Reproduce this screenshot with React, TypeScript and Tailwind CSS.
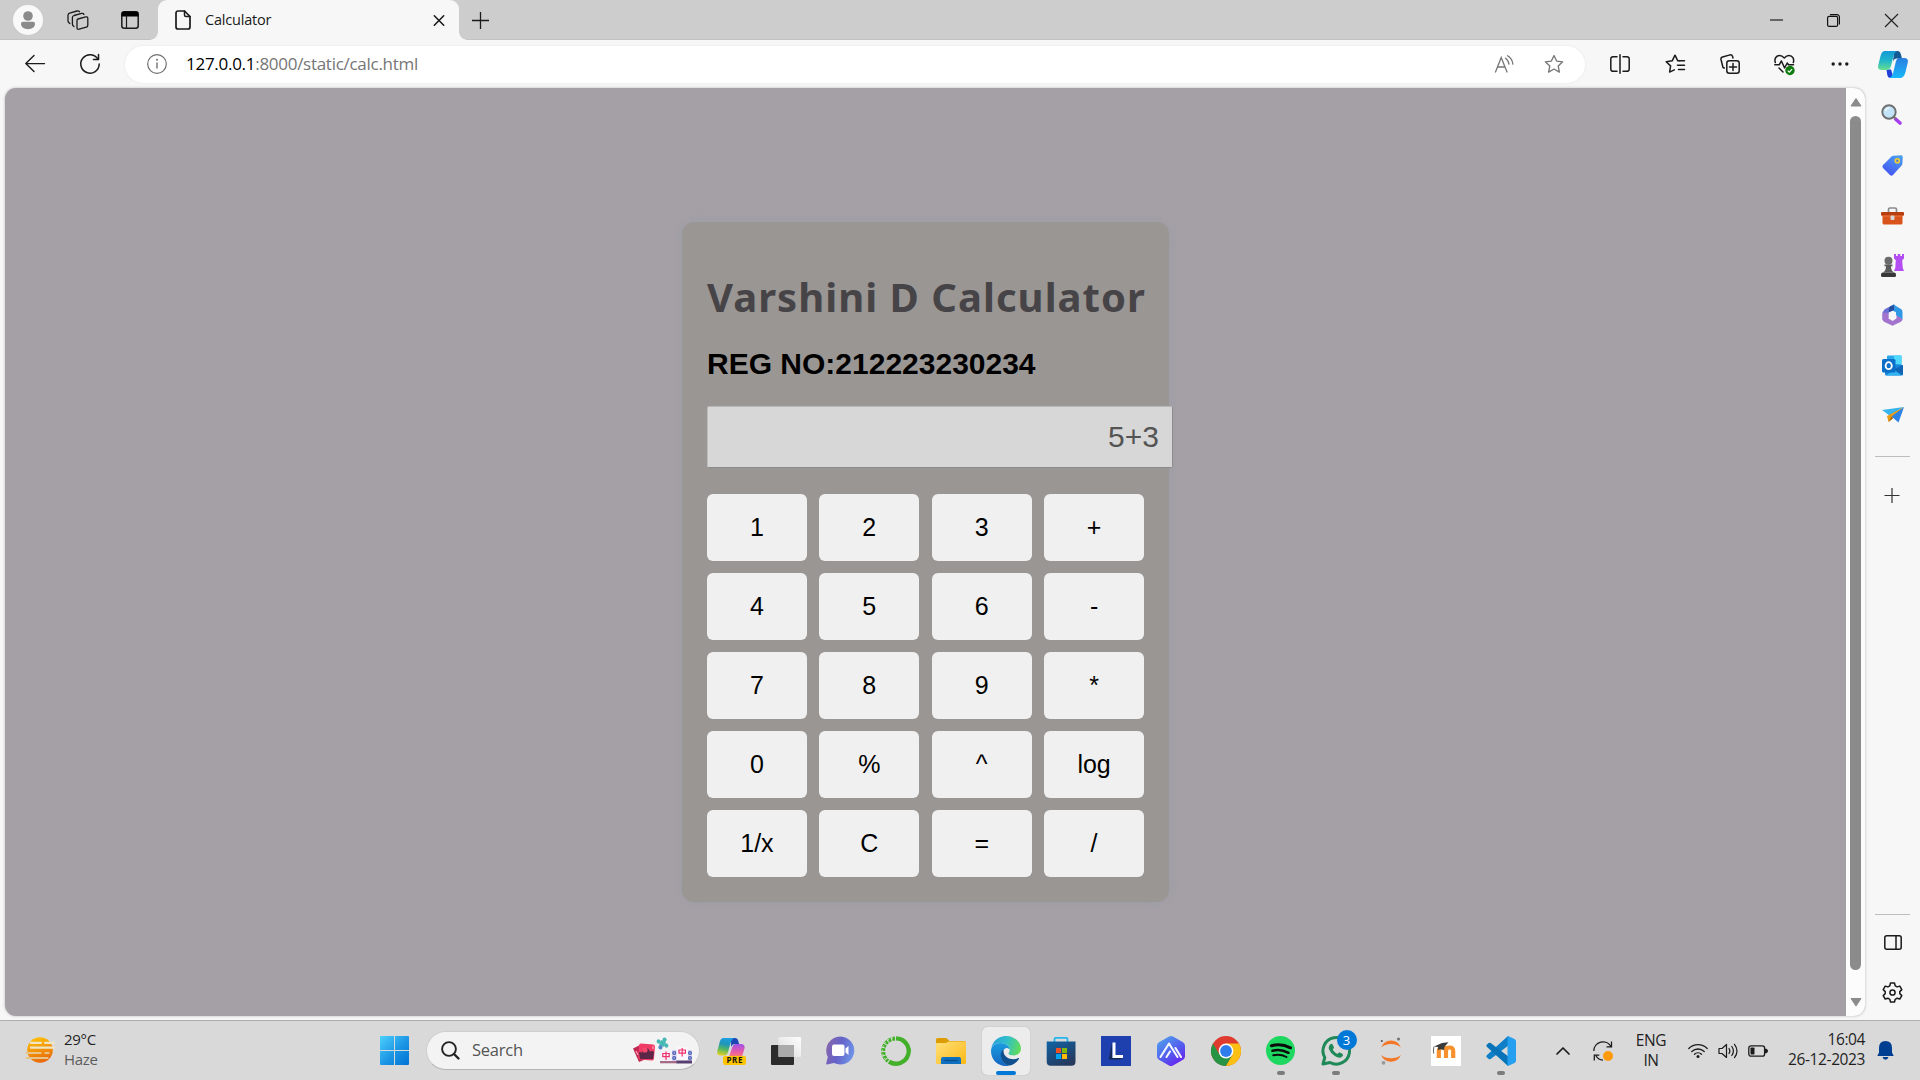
import React from "react";

type Kids = { children?: React.ReactNode };
type IconProps = Kids & { w?: number; h?: number; vb?: string; className?: string };

function Svg({ w = 24, h, vb, className = "", children }: IconProps) {
  const hh = h ?? w;
  return (
    <svg width={w} height={hh} viewBox={vb ?? `0 0 ${w} ${hh}`} fill="none" className={`block shrink-0 overflow-visible ${className}`}>
      {children}
    </svg>
  );
}

function Cell({ className = "", children }: Kids & { className?: string }) {
  return <div className={`flex shrink-0 items-center justify-center ${className}`}>{children}</div>;
}

const ink = { stroke: "#1b1b1b", strokeWidth: 1.5, strokeLinecap: "round" as const, strokeLinejoin: "round" as const };

/* ---------- browser chrome ---------- */

function TabStrip() {
  return (
    <div className="flex h-10 bg-[#cdcdcd] shadow-[inset_0_-1px_0_#c2c2c2]">
      <Cell className="w-14">
        <Svg w={30}>
          <circle cx="15" cy="15" r="15" fill="#f9f9f9" />
          <circle cx="15" cy="11" r="4.8" fill="#8b8b8b" />
          <path d="M10 16.800h10a2 2 0 0 1 2 2c0 3.400-3 5.400-7 5.400s-7-2-7-5.400a2 2 0 0 1 2-2z" fill="#8b8b8b" />
        </Svg>
      </Cell>
      <Cell className="w-11">
        <Svg w={22} h={20}>
          <g {...ink} strokeWidth={1.3}>
            <path d="M11 9 18.800 6.900q2-.4 2 1.500v6.800q0 1.500-1.400 1.900l-7.400 2.100q-2 .5-2-1.500v-7.200q0-1.300 1-1.600z" />
            <path d="M7 16.600 6.400 16q-1-.8-1-2V7.500Q5.400 6 7 5.500l7.500-2.100q1.700-.4 2.500.9" />
            <path d="M2.800 13.500 2 12.800q-1-.8-1-2V5.300Q1 3.600 2.600 3.100L10 1q1.600-.4 2.500.7" />
          </g>
        </Svg>
      </Cell>
      <Cell className="w-[58px] pl-0.5">
        <Svg w={18}>
          <rect x=".8" y=".8" width="16.400" height="16.400" rx="2.500" {...ink} />
          <path d="M.5 5.500V3A2.500 2.500 0 0 1 3 .5h12A2.500 2.500 0 0 1 17.500 3v2.500z" fill="#000" />
          <path d="M5.500 5v12" {...ink} strokeWidth={1.2} />
        </Svg>
      </Cell>
      <div className="relative flex w-[301px] items-center rounded-t-[9px] bg-[#f7f7f7] pl-[17px] pr-[12px]">
        <Svg w={16} h={20} className="mr-[14px]">
          <path d="M3 1h6.500L15 6.500V17a2 2 0 0 1-2 2H3a2 2 0 0 1-2-2V3a2 2 0 0 1 2-2z" {...ink} strokeWidth={1.7} />
          <path d="M9.500 1v4a1.500 1.500 0 0 0 1.500 1.500h4" {...ink} strokeWidth={1.5} />
        </Svg>
        <span className="grow text-[14.500px] tracking-[-0.200px] text-[#1a1a1a]">Calculator</span>
        <Svg w={16}>
          <path d="M3.300 3.800l9.400 9.400M12.700 3.800L3.300 13.200" {...ink} strokeWidth={1.6} />
        </Svg>
        <div className="absolute -left-2 bottom-0 size-2 bg-[radial-gradient(circle_at_0_0,#cdcdcd_7.5px,#f7f7f7_8px)]" />
        <div className="absolute -right-2 bottom-0 size-2 bg-[radial-gradient(circle_at_100%_0,#cdcdcd_7.5px,#f7f7f7_8px)]" />
      </div>
      <Cell className="w-[43px]">
        <Svg w={17}>
          <path d="M8.500 0v17M0 8.500h17" stroke="#1b1b1b" strokeWidth="1.300" />
        </Svg>
      </Cell>
      <div className="grow" />
      <Cell className="w-[57px]">
        <Svg w={13}>
          <path d="M0 6h13" stroke="#111" strokeWidth="1.100" />
        </Svg>
      </Cell>
      <Cell className="w-[57px]">
        <Svg w={13}>
          <rect x=".6" y="2.400" width="10" height="10" rx="1.500" stroke="#111" strokeWidth="1.200" />
          <path d="M3 .6h7a2.400 2.400 0 0 1 2.400 2.400v7.400" stroke="#111" strokeWidth="1.200" />
        </Svg>
      </Cell>
      <Cell className="w-[58px]">
        <Svg w={13}>
          <path d="M0 0l13 13M13 0L0 13" stroke="#222" strokeWidth="1.200" />
        </Svg>
      </Cell>
    </div>
  );
}

const star = "M10 1.500l2.600 5.600 6.100.7-4.500 4.200 1.200 6.100L10 15l-5.400 3.100 1.200-6.100L1.300 7.800l6.100-.7z";

function Toolbar() {
  return (
    <div className="flex h-12 items-center bg-[#f7f7f7]">
      <Cell className="w-[70px]">
        <Svg w={20} h={18}>
          <path d="M19.500 8.600H.8M9 .6.8 8.600 9 16.600" {...ink} strokeWidth={1.4} />
        </Svg>
      </Cell>
      <Cell className="w-10">
        <Svg w={20}>
          <path d="M18 5.400A9.200 9.200 0 1 0 19.200 10" {...ink} strokeWidth={1.5} />
          <path d="M18.500.6v5h-5" {...ink} strokeWidth={1.5} />
        </Svg>
      </Cell>
      <div className="ml-[15px] flex h-[37px] w-[1460px] items-center rounded-full bg-white shadow-[0_0_3px_rgba(0,0,0,0.07)]">
        <Svg w={20} className="ml-[22px]">
          <circle cx="10" cy="10" r="9.300" stroke="#707070" strokeWidth="1.200" />
          <path d="M10 8.500v6" stroke="#707070" strokeWidth="1.400" />
          <circle cx="10" cy="5.800" r="1" fill="#707070" />
        </Svg>
        <span className="-mt-px ml-[19px] grow text-[17px] tracking-[-0.280px] text-[#757575]">
          <span className="text-black">127.0.0.1</span>:8000/static/calc.html
        </span>
        <Svg w={20} h={18} className="mr-[30px]">
          <g stroke="#757575" strokeWidth="1.300" strokeLinecap="round">
            <path d="M1.500 17 7.200 2.500 13 17M3.500 12h7.400" />
            <path d="M11.500 3.200q3 2 3.500 6M13.500.8q4.700 2.600 5.400 8.400" />
          </g>
        </Svg>
        <Svg w={20} className="mr-[21px]">
          <path d={star} stroke="#757575" strokeWidth="1.300" strokeLinejoin="round" />
        </Svg>
      </div>
      <Cell className="ml-[7px] w-[55px]">
        <Svg w={20}>
          <path d="M7 2.700H3A2.200 2.200 0 0 0 .8 5v10A2.200 2.200 0 0 0 3 17.300h4M13 2.700h4A2.200 2.200 0 0 1 19.200 5v10a2.200 2.200 0 0 1-2.200 2.300h-4M10 .8v18.400" {...ink} />
        </Svg>
      </Cell>
      <Cell className="w-[55px]">
        <Svg w={20}>
          <path d="M14.500 6.800h-1.700L10 1.200 7.200 6.800 1.200 7.700l4.400 4.200-1 6.200 4.700-2.300" {...ink} />
          <path d="M14.500 6.800H19.500M12.500 11.200H19.500M13.500 15.400H19.500" {...ink} />
        </Svg>
      </Cell>
      <Cell className="w-[55px]">
        <Svg w={20}>
          <rect x="6.800" y="6.800" width="12.400" height="12.400" rx="2.500" {...ink} />
          <path d="M13 9.500v7M9.500 13h7M4.300 14 3 13.500l-2-8Q.6 3.600 2.500 3L10 .9q1.800-.4 2.500 1.300l.5 1.800" {...ink} />
        </Svg>
      </Cell>
      <Cell className="w-[55px]">
        <Svg w={21} h={21}>
          <path d="M1.300 8.500C0 4.500 2.500 1.500 5.500 1.500c2.200 0 3.500 1 4.800 2.500C11.600 2.500 13 1.500 15 1.500c3.500 0 5.500 3.500 4.300 7M5 14l4 4" {...ink} />
          <path d="M.8 10.800h4.400L7.400 7l3.200 7 2.600-5 1.300 1.800h5" {...ink} />
          <circle cx="16" cy="16.500" r="4.700" fill="#107c10" />
          <path d="M13.800 16.600l1.500 1.500 2.800-2.900" stroke="#fff" strokeWidth="1.200" />
        </Svg>
      </Cell>
      <Cell className="w-[55px]">
        <Svg w={18} h={4}>
          <circle cx="2.200" cy="2" r="1.700" fill="#1b1b1b" />
          <circle cx="9" cy="2" r="1.700" fill="#1b1b1b" />
          <circle cx="15.800" cy="2" r="1.700" fill="#1b1b1b" />
        </Svg>
      </Cell>
      <Cell className="w-[51px]">
        <Svg w={30} h={27}>
          <defs>
            <linearGradient id="cpA" x1="0" y1="0" x2="0" y2="1">
              <stop stopColor="#1499d6" />
              <stop offset=".5" stopColor="#20b5cb" />
              <stop offset="1" stopColor="#67df91" />
            </linearGradient>
            <linearGradient id="cpB" x1="0" y1="0" x2="0" y2="1">
              <stop stopColor="#2b7de0" />
              <stop offset="1" stopColor="#17b8fb" />
            </linearGradient>
          </defs>
          <path d="M16 0h3.500q2.500 0 3.300 3l1.200 4.500h-5q-3 0-4 3z" fill="#145b96" />
          <path d="M8.500 18.500H13l1.500 4.500q-.5 3.500-1 4h-1q-2.500 0-3.200-3z" fill="#203fd6" />
          <path d="M7 0h12q-2.500 1-3.500 5l-2.500 10q-1 4-4.500 4H4q-4.800 0-3.800-4.500L2.500 5Q3.800 0 7 0z" fill="url(#cpA)" />
          <path d="M21.500 7H26q4.800 0 3.800 4.500L27.500 21Q26 27 22 27H11.500q2.500-.8 3.500-4.500l2.500-10.500q1-5 4-5z" fill="url(#cpB)" />
        </Svg>
      </Cell>
    </div>
  );
}

/* ---------- calculator page ---------- */

const keys = ["1", "2", "3", "+", "4", "5", "6", "-", "7", "8", "9", "*", "0", "%", "^", "log", "1/x", "C", "=", "/"];

function Calculator() {
  return (
    <div className="h-[680px] w-[487px] rounded-[12px] bg-[#9a9694] px-[25px] pt-[48px] shadow-[0_0_13px_#9a9ca6] [font-family:'Liberation_Sans',Arial,sans-serif]">
      <h1 className="whitespace-nowrap text-[40px] font-bold leading-[54px] tracking-[1.020px] text-[#464447] [font-family:'Noto_Sans',sans-serif]">
        Varshini D Calculator
      </h1>
      <h2 className="mt-[23px] text-[30px] font-bold leading-[34px] text-black">REG NO:212223230234</h2>
      <div className="mt-[25px] flex h-[62px] w-[466px] items-center justify-end rounded-[2px] border border-[#8b8b8b] border-l-[#bcbcbc] border-t-[#b8b8b8] bg-[#d7d7d7] pb-px pr-[13px] text-[30px] text-[#545454]">
        5+3
      </div>
      <div className="mt-[26px] grid w-[437px] grid-cols-4 gap-x-[12.500px] gap-y-3">
        {keys.map((k) => (
          <button key={k} className="h-[67px] rounded-[6px] bg-[#f0f0f0] text-[25px] text-black">
            {k}
          </button>
        ))}
      </div>
    </div>
  );
}

function Scrollbar() {
  return (
    <div className="flex w-[19px] flex-col items-center bg-[#fcfcfc] py-[10px]">
      <Svg w={12} h={9}>
        <path d="M6 .5 11 8H1z" fill="#8b8b8b" stroke="#8b8b8b" strokeLinejoin="round" />
      </Svg>
      <div className="mb-[27px] mt-[9px] w-[11px] grow rounded-full bg-[#8b8b8b]" />
      <Svg w={12} h={9}>
        <path d="M6 9 11 1.500H1z" fill="#8b8b8b" stroke="#8b8b8b" strokeLinejoin="round" />
      </Svg>
    </div>
  );
}

/* ---------- edge sidebar ---------- */

function Sidebar() {
  return (
    <div className="flex w-[55px] flex-col items-center">
      <Cell className="h-[52px] pr-0.5">
        <Svg w={21}>
          <path d="M14.500 15l4.500 4" stroke="#a53df0" strokeWidth="3.600" strokeLinecap="round" />
          <path d="M12.500 12.500l2.500 2.300" stroke="#777" strokeWidth="2" />
          <circle cx="8" cy="8" r="6.700" fill="#c3e3f8" stroke="#6f6f6f" strokeWidth="1.900" />
          <path d="M4.500 7a4 4 0 0 1 4-3" stroke="#eef9ff" strokeWidth="1.500" />
        </Svg>
      </Cell>
      <Cell className="h-[51px]">
        <Svg w={21}>
          <defs>
            <linearGradient id="tag" x1=".8" y1="0" x2=".3" y2="1">
              <stop stopColor="#4aa0f0" />
              <stop offset="1" stopColor="#4553f2" />
            </linearGradient>
          </defs>
          <path d="M11.500.8 19 .3q1.800 0 1.800 1.700l-.4 6.500q0 1-.8 1.900L11 20q-1.500 1.300-3 0L1 13q-1.300-1.500 0-3L9.500 1.500q.8-.7 2-.7z" fill="url(#tag)" />
          <circle cx="15.300" cy="5.700" r="2" fill="#5b7ad0" stroke="#f8d030" strokeWidth="1.600" />
        </Svg>
      </Cell>
      <Cell className="h-[50px]">
        <Svg w={23} h={18}>
          <path d="M7.500 5V2.500Q7.500 1 9 1h5q1.500 0 1.500 1.500V5" stroke="#8a8a8a" strokeWidth="1.700" />
          <rect x="1.500" y="5" width="20" height="12.500" rx="1.500" fill="#d9541c" />
          <rect x="0" y="5" width="23" height="3.800" rx="1" fill="#b83e10" />
          <path d="M1.500 9h20" stroke="#ee7638" strokeWidth="1" />
          <rect x="9.500" y="8.500" width="4" height="4.500" rx="1" fill="#d6d6d6" />
        </Svg>
      </Cell>
      <Cell className="h-[49px]">
        <Svg w={23}>
          <path d="M13 0h2v2h1.700V0h2.600v2H21V0h2v4.500l-1.800 1.700.5 7.500L23 17H13l1.300-3.300.5-7.500L13 4.500z" fill="#b44df2" />
          <circle cx="7.500" cy="6.800" r="4" fill="#6b6b6b" />
          <path d="M3.500 10.500h8v1.800H10q0 4.200 2.800 6.200H2.200Q5 16.500 5 12.300H3.500z" fill="#5a5a5a" />
          <path d="M0 20.500q0-2 2-2h11q2 0 2 2v1q0 1.500-1.500 1.500h-12Q0 23 0 21.500z" fill="#383838" />
        </Svg>
      </Cell>
      <Cell className="h-[50px]">
        <Svg w={21} h={22}>
          <path d="M12.500.3 4 4.500Q.5 6.500.5 10v6l6-2.500V8.800L13 5z" fill="#6a70d8" />
          <path d="M8 2.400 11.500.5 19 5q1.500 1 1.500 3v7.500L14 11.500V8.300L8.500 5.500z" fill="#3099e6" />
          <path d="M.5 8.500V15q0 1.800 1.500 2.700l8.500 4L18.500 18q2-1 2-3l-6-3.600v3L10.500 17l-4-2.500V9z" fill="#a374ce" />
          <path d="M7 8.200 12 6v-5L8 2.400Q6.800 3.500 6.800 6z" fill="#274f9c" />
          <circle cx="10.500" cy="11.200" r="3.700" fill="#f7f7f7" />
        </Svg>
      </Cell>
      <Cell className="h-[50px]">
        <Svg w={21}>
          <rect x="5" y=".5" width="14.500" height="16" rx="1" fill="#28a8ea" />
          <path d="M12 .5h7.500V9H12z" fill="#50d9ff" />
          <path d="M3 10h18v9a1.500 1.500 0 0 1-1.500 1.500h-15A1.500 1.500 0 0 1 3 19z" fill="#1784d9" />
          <path d="M21 10v9a1.500 1.500 0 0 1-.5 1L12 14.500z" fill="#1066b5" />
          <path d="M4 20.500h15.500L12 15z" fill="#32b4f0" />
          <rect x="0" y="4" width="13.500" height="13.500" rx="1.500" fill="#0a6fc8" />
          <ellipse cx="6.700" cy="10.700" rx="3.100" ry="3.500" stroke="#fff" strokeWidth="1.800" />
        </Svg>
      </Cell>
      <Cell className="h-[50px]">
        <Svg w={22} h={16}>
          <path d="M0 3 22 0 7.500 8.500z" fill="#38b5f0" />
          <path d="M22 0 5 9 6.500 15l4-4z" fill="#e99a13" />
          <path d="M22 0 9.500 9.500 16.500 15.500z" fill="#2b82e8" />
          <path d="M9.500 9.500 6.500 15l4.500-3.500z" fill="#a76608" />
        </Svg>
      </Cell>
      <div className="mt-[16px] h-px w-[35px] bg-[#bdbdbd]" />
      <Cell className="h-[77px]">
        <Svg w={15}>
          <path d="M7 0v15M-.5 7.500h15" stroke="#333" strokeWidth="1.200" />
        </Svg>
      </Cell>
      <div className="grow" />
      <div className="h-px w-[35px] bg-[#bdbdbd]" />
      <Cell className="h-[55px]">
        <Svg w={18} h={15}>
          <rect x=".8" y=".8" width="16.400" height="13.400" rx="2" {...ink} />
          <path d="M12 1v13" {...ink} />
        </Svg>
      </Cell>
      <Cell className="mb-[6px] h-[44px]">
        <Svg w={21}>
          <path
            d="M8.500 1h4l.7 2.800 1.900 1.100 2.700-.8 2 3.500-2 2v2l2 2-2 3.400-2.700-.8-1.900 1.100-.7 2.700h-4l-.7-2.700-1.900-1.100-2.700.8-2-3.400 2-2v-2l-2-2 2-3.500 2.700.8 1.900-1.100z"
            {...ink}
          />
          <circle cx="10.500" cy="10.500" r="2.600" {...ink} />
        </Svg>
      </Cell>
    </div>
  );
}

/* ---------- taskbar ---------- */

function WindowsLogo() {
  return (
    <Svg w={29}>
      <defs>
        <linearGradient id="win" x1="0" y1="0" x2="29" y2="29" gradientUnits="userSpaceOnUse">
          <stop stopColor="#4dd0fc" />
          <stop offset=".55" stopColor="#1b95e4" />
          <stop offset="1" stopColor="#0072d4" />
        </linearGradient>
      </defs>
      <path d="M1 0h13v14H0V1a1 1 0 0 1 1-1zM15 0h13a1 1 0 0 1 1 1v13H15zM0 15h14v14H1a1 1 0 0 1-1-1zM15 15h14v13a1 1 0 0 1-1 1H15z" fill="url(#win)" />
    </Svg>
  );
}

function SearchBox() {
  return (
    <div className="flex h-[39px] w-[274px] items-center rounded-full border border-[#cfcfcf] border-b-[#b5b5b5] bg-[#f3f3f3] pl-[14px] pr-[6px]">
      <Svg w={19}>
        <circle cx="8" cy="8" r="6.900" stroke="#222" strokeWidth="1.900" />
        <path d="M13 13l4.500 4.500" stroke="#222" strokeWidth="2.400" strokeLinecap="round" />
      </Svg>
      <span className="ml-[12px] grow text-[16.500px] tracking-[-0.250px] text-[#555]">Search</span>
      <Svg w={60} h={28}>
        <path d="M0 11.500 6 8.500l6 14-6 2.500z" fill="#c02450" />
        <rect x="5.500" y="7" width="16" height="16" rx="2" fill="#ee3a64" transform="rotate(5 13 15)" />
        <path d="M6 16q1-2 3 0 1-5 4-5t4 4q2-2 4 0l-1 7H7z" fill="#5c2647" />
        <circle cx="12" cy="13" r="2.600" fill="#f5486c" />
        <path d="M3 14l2 4M20 9v3" stroke="#ff9db2" strokeWidth="1.300" />
        <g fill="#45b8b4" transform="rotate(28 29.500 6.500)">
          <rect x="27" y="4" width="5" height="5" />
          <circle cx="29.500" cy="2.200" r="2.100" />
          <circle cx="33.800" cy="6.500" r="2.100" />
          <circle cx="29.500" cy="10.800" r="2.100" fill="#4f86c4" />
          <circle cx="25.200" cy="6.500" r="2.100" />
        </g>
        <rect x="27" y="13" width="12" height="13" rx="1" fill="#f4f0f8" />
        <rect x="39" y="13" width="5" height="13" fill="#d5d3ee" />
        <rect x="54" y="13" width="5" height="13" rx="1" fill="#d5d3ee" />
        <path d="M27 24h17v2.300H27z" fill="#a46c88" />
        <rect x="43.500" y="10" width="11.500" height="14" rx="1" fill="#faf6fc" />
        <path d="M43.500 23.500H59v3H43.500z" fill="#574070" />
        <path d="M29.800 16.500h6.400v3.200h-6.400zM33 14.500v8.500M46 13h6.400v3.200H46zM49.200 11v8.500" stroke="#f0316b" strokeWidth="1.200" />
        <g stroke="#4a5fb5" strokeWidth="1.300">
          <circle cx="41.200" cy="16" r="1.400" />
          <circle cx="41.200" cy="21" r="1.400" />
          <circle cx="57" cy="16" r="1.400" />
          <circle cx="57" cy="21" r="1.400" />
        </g>
      </Svg>
    </div>
  );
}

function CopilotPre() {
  return (
    <Svg w={29} h={28}>
      <defs>
        <linearGradient id="preA" x1=".5" y1="0" x2=".3" y2="1">
          <stop stopColor="#1b9fe0" />
          <stop offset=".35" stopColor="#2196b8" />
          <stop offset=".65" stopColor="#58b860" />
          <stop offset="1" stopColor="#e6cf20" />
        </linearGradient>
        <linearGradient id="preB" x1="0" y1="0" x2="0" y2="1">
          <stop stopColor="#a052e8" />
          <stop offset=".6" stopColor="#e85aa8" />
          <stop offset="1" stopColor="#f8806c" />
        </linearGradient>
      </defs>
      <path d="M14 1h4q2.500 0 3.300 3l.8 3h-4q-3 0-4 3z" fill="#1d48b4" />
      <path d="M6.500 1H17q-2.500 1-3.300 4.500L11 15q-1 3.500-4 3.500H4Q-.5 18.500.3 14L2.700 5Q3.800 1 6.500 1z" fill="url(#preA)" />
      <path d="M19 7h5q4 0 3.600 4L25 20H12l3-9q1.200-4 4-4z" fill="url(#preB)" />
      <rect x="6" y="19" width="23" height="9" rx="2" fill="#fdc500" />
      <text x="17.800" y="26.400" textAnchor="middle" fontSize="8" fontWeight="700" letterSpacing=".6" fill="#111" fontFamily="Noto Sans, sans-serif">
        PRE
      </text>
    </Svg>
  );
}

function TaskView() {
  return (
    <Svg w={30} h={28}>
      <defs>
        <linearGradient id="tv" x1="1" y1="0" x2="0" y2="1">
          <stop stopColor="#fdfdfd" />
          <stop offset="1" stopColor="#dcdcdc" />
        </linearGradient>
      </defs>
      <rect x="0" y="8" width="23" height="20" rx="1" fill="#2c2c2c" />
      <rect x="7.500" y="0" width="22.500" height="20" rx="1" fill="url(#tv)" />
      <rect x="7.500" y="8" width="15.500" height="12" fill="#ababab" />
    </Svg>
  );
}

function Chat() {
  return (
    <Svg w={29}>
      <defs>
        <linearGradient id="chat" x1="0" y1=".2" x2="1" y2=".5">
          <stop stopColor="#8a66ac" />
          <stop offset=".5" stopColor="#6463c8" />
          <stop offset="1" stopColor="#6f93e8" />
        </linearGradient>
      </defs>
      <path d="M14.500.5a14 14 0 1 1-6.500 26.500L1 28.500q-1 0-.8-1.200L1.800 21A14 14 0 0 1 14.500.5z" fill="url(#chat)" />
      <rect x="6" y="8.500" width="12.500" height="11.500" rx="2" fill="#fff" />
      <path d="M19.500 12.500 22.500 10v9l-3-2.500z" fill="#fff" />
    </Svg>
  );
}

function Ring() {
  return (
    <Svg w={30}>
      <path d="M15 2.300A12.700 12.700 0 1 1 8 25.600" stroke="#43b02a" strokeWidth="4.300" />
      <path d="M14 2.500A12.600 12.600 0 0 0 7 25" stroke="#43b02a" strokeWidth="4" strokeDasharray="3 1" />
      <path d="M12 1.800A13.500 13.500 0 0 0 4 23" stroke="#dbe8d6" strokeWidth=".9" strokeDasharray="2 2.200" />
    </Svg>
  );
}

function Explorer() {
  return (
    <Svg w={30} h={26}>
      <defs>
        <linearGradient id="fold" x1="0" y1="0" x2="1" y2="1">
          <stop stopColor="#ffe07a" />
          <stop offset="1" stopColor="#fcb813" />
        </linearGradient>
      </defs>
      <path d="M0 1.500Q0 0 1.500 0h8q1 0 2 1l2 2H28.500Q30 3 30 4.500V8H0z" fill="#dd9d06" />
      <path d="M0 6q0-1 1-1h8.500q1 0 2-.7l1-.8H29q1 0 1 1V25q0 1-1 1H1q-1 0-1-1z" fill="url(#fold)" />
      <path d="M5 26v-5q0-2 2-2h16q2 0 2 2v5z" fill="#0f70c0" />
      <path d="M9 22.500h12" stroke="#08508c" strokeWidth="1.400" strokeLinecap="round" />
    </Svg>
  );
}

function Edge() {
  return (
    <Svg w={30}>
      <defs>
        <linearGradient id="edA" x1="0" y1=".3" x2="1" y2=".5">
          <stop stopColor="#2a9fdc" />
          <stop offset=".5" stopColor="#30bfca" />
          <stop offset="1" stopColor="#62dc58" />
        </linearGradient>
        <linearGradient id="edB" x1="0" y1="0" x2="0" y2="1">
          <stop stopColor="#1b9ce0" />
          <stop offset="1" stopColor="#1566c0" />
        </linearGradient>
      </defs>
      <path d="M.3 12.500C1.500 5 7.500 0 15 0c8.500 0 15 6 15 12.500 0 4-3 7-7 7-3.500 0-5.500-1-5.500-2.300 0-.7 1.200-1.200 1.200-3.200C18.700 10 14 6.800 9 7 4.500 7.200 1 9.500.3 12.500z" fill="url(#edA)" />
      <path d="M0 15C0 10 4 7 9.500 7c5 0 9 3 9.200 6.500-1-1-2-1.500-3.200-1.500-3.500 1-5.500 5-5 9 .5 4 3.500 8 8 8.500-1.200.4-2.500.5-3.800.5C6.500 30 0 23.500 0 15z" fill="url(#edB)" />
      <path d="M12.500 13.200C9.500 15.500 9 20 11 24c1.700 3.500 4.700 5.500 8 5.500 4-1 7-3.500 9-6.800.3-.7-.2-1-.8-.6-4.700 2.400-12.200.9-14.200-4.300-.6-1.800-.5-3.400-.5-4.600z" fill="#10508f" />
    </Svg>
  );
}

function Store() {
  return (
    <Svg w={30}>
      <defs>
        <linearGradient id="store" x1="0" y1="0" x2=".6" y2="1">
          <stop stopColor="#0f63a5" />
          <stop offset="1" stopColor="#263a5e" />
        </linearGradient>
      </defs>
      <path d="M8.500 6V3q0-1.200 1.200-1.200h10.600q1.200 0 1.200 1.200v3" stroke="#24b4ee" strokeWidth="1.800" />
      <path d="M.7 5.500h28.800v20.300q0 4-4 4H4.700q-4 0-4-4z" fill="url(#store)" />
      <path d="M10 12h5v5h-5z" fill="#f25022" />
      <path d="M16 12h5v5h-5z" fill="#7fba00" />
      <path d="M10 18h5v5h-5z" fill="#00a4ef" />
      <path d="M16 18h5v5h-5z" fill="#ffb900" />
    </Svg>
  );
}

function Hex() {
  return (
    <Svg w={28} h={30}>
      <defs>
        <linearGradient id="hex" x1=".1" y1="0" x2=".8" y2="1">
          <stop stopColor="#4fa5ee" />
          <stop offset=".6" stopColor="#5457ee" />
          <stop offset="1" stopColor="#6a1df0" />
        </linearGradient>
      </defs>
      <path d="M12 .6q2-1.200 4 0l10 5.700q2 1.200 2 3.400v10.600q0 2.200-2 3.400l-10 5.700q-2 1.200-4 0L2 23.700Q0 22.500 0 20.300V9.700Q0 7.500 2 6.300z" fill="url(#hex)" />
      <path d="M3.500 21 12 7.500 20.500 21M9.500 21l3.500-5.500M18.500 12 24 21" stroke="#f3f5ff" strokeWidth="2.100" strokeLinecap="round" strokeLinejoin="round" />
    </Svg>
  );
}

function Chrome() {
  return (
    <Svg w={30}>
      <circle cx="15" cy="15" r="15" fill="#df3b2f" />
      <path d="M2 7.500A15 15 0 0 0 15 30l6.500-11.300L15 15l-6.500 3.700z" fill="#259545" />
      <path d="M15 7.500h13a15 15 0 0 1-13 22.500l6.500-11.300z" fill="#fcc015" />
      <circle cx="15" cy="15" r="7.400" fill="#fff" />
      <circle cx="15" cy="15" r="5.900" fill="#2f7ded" />
    </Svg>
  );
}

function Spotify() {
  return (
    <Svg w={29}>
      <circle cx="14.500" cy="14.500" r="14.500" fill="#1ed760" />
      <path d="M5.500 9.800q9.500-2.800 19 2" stroke="#0b0b0b" strokeWidth="3" strokeLinecap="round" />
      <path d="M6.500 14.800q8-2.300 16 2" stroke="#0b0b0b" strokeWidth="2.500" strokeLinecap="round" />
      <path d="M7.200 19.300q7-1.800 13.300 1.700" stroke="#0b0b0b" strokeWidth="2" strokeLinecap="round" />
    </Svg>
  );
}

function WhatsApp() {
  return (
    <div className="relative">
      <Svg w={30}>
        <path d="M2 28 3.800 21.500A13.300 13.300 0 1 1 9 26.500z" stroke="#1f8a57" strokeWidth="3" strokeLinejoin="round" />
        <path d="M8.300 9.500q1.500-2.500 3-1.500l1.800 3.500-1.300 2.200q1.700 3 4.500 4.300l2-1.700 3.500 1.700q.8 1.500-1 3-2.800 1.700-7-1-4.500-3-6-7-.3-2 .5-3.500z" fill="#1f8a57" />
      </Svg>
      <span className="absolute -top-[6px] left-[16px] flex size-5 items-center justify-center rounded-full bg-[#0078d7] text-[13px] leading-5 text-white">3</span>
    </div>
  );
}

function Jupyter() {
  return (
    <Svg w={22} h={28}>
      <path d="M1 10.500Q4 3.500 11 3.500t10 7Q17 7 11 7T1 10.500z" fill="#f37726" />
      <path d="M1 18Q4 24.800 11 24.800T21 18q-4 3.300-10 3.300T1 18z" fill="#f37726" />
      <circle cx="18.500" cy="2" r="1.500" fill="#717171" />
      <circle cx="1.800" cy="4" r="1.100" fill="#555" />
      <circle cx="3.500" cy="25.800" r="1.900" fill="#9a9a9a" />
    </Svg>
  );
}

function Moodle() {
  return (
    <Svg w={30}>
      <rect width="30" height="30" fill="#fff" />
      <path d="M7.800 22v-7q0-3.500 3.600-3.500T15 15v7-7q0-3.500 3.600-3.500T22.200 15v7" stroke="#f7912e" strokeWidth="4.200" />
      <path d="M3 10.500 11 7l6.500-.8-4 4.500-.5 3.300q-3-1.500-6 0V11z" fill="#3a3a3a" />
      <path d="M3 10.500q-1 3.500-.3 7" stroke="#666" strokeWidth="1" />
    </Svg>
  );
}

function Code() {
  return (
    <Svg w={30}>
      <path d="M22 0 1 19q-1.500 1.300 0 2.500L2.700 23q1 .7 2 0L23 9z" fill="#0f7fc7" />
      <path d="M22 30 1 11q-1.500-1.300 0-2.500L2.700 7q1-.7 2 0L23 21z" fill="#0873b8" />
      <path d="M22 0l6.500 3q1.500.8 1.500 2.300v19.400q0 1.500-1.500 2.300L22 30q-.5-.5-.5-1.500V2q0-1 .5-2z" fill="#25a0f0" />
    </Svg>
  );
}

type App = { name: string; icon: React.ReactNode; dot?: boolean };

const apps: App[] = [
  { name: "task view", icon: <TaskView /> },
  { name: "chat", icon: <Chat /> },
  { name: "ring", icon: <Ring /> },
  { name: "explorer", icon: <Explorer /> },
  { name: "edge", icon: <Edge /> },
  { name: "store", icon: <Store /> },
  {
    name: "l",
    icon: (
      <Svg w={30}>
        <rect width="30" height="30" fill="#1e3fae" />
        <path d="M8 22 11 7v15h11l-3 1.500H8z" fill="#132a55" />
        <path d="M13 6.500V20.500h9" stroke="#fff" strokeWidth="3" />
      </Svg>
    ),
  },
  { name: "hex", icon: <Hex /> },
  { name: "chrome", icon: <Chrome /> },
  { name: "spotify", icon: <Spotify />, dot: true },
  { name: "whatsapp", icon: <WhatsApp />, dot: true },
  { name: "jupyter", icon: <Jupyter /> },
  { name: "moodle", icon: <Moodle /> },
  { name: "code", icon: <Code />, dot: true },
];

function Taskbar() {
  return (
    <div className="flex h-[60px] items-center border-t border-[#aeaeae] bg-[#d9d9d9] text-[15px] text-[#1f1f1f]">
      <div className="flex w-[367px] items-center pl-[25px]">
        <Svg w={30} h={26} className="-mt-0.5">
          <defs>
            <linearGradient id="sun" x1=".3" y1="0" x2=".6" y2="1">
              <stop stopColor="#fdc10a" />
              <stop offset="1" stopColor="#e8650a" />
            </linearGradient>
          </defs>
          <circle cx="15" cy="13" r="12.800" fill="url(#sun)" />
          <g stroke="#f0e6c4" strokeWidth="2.200" strokeLinecap="round">
            <path d="M6 5.800h10M20 5.800h9M6 10.700h23" />
            <path d="M1.500 16h14M20.500 16h3M1.500 21h21" stroke="#e6c58a" />
          </g>
        </Svg>
        <div className="-mt-1 ml-[9px] leading-[20px] tracking-[-0.300px]">
          <div>29°C</div>
          <div className="text-[#5c5c5c]">Haze</div>
        </div>
      </div>
      <Cell className="w-[55px]">
        <WindowsLogo />
      </Cell>
      <div className="ml-[4px]">
        <SearchBox />
      </div>
      <Cell className="ml-[4px] w-[54px]">
        <CopilotPre />
      </Cell>
      {apps.map((a) => (
        <Cell key={a.name} className="w-[55px]">
          {a.name === "edge" ? (
            <div className="relative flex size-12 items-center justify-center rounded-[5px] bg-[#ececec] shadow-[0_0_1px_#999]">
              {a.icon}
              <div className="absolute bottom-0 left-[14px] h-1 w-5 rounded-full bg-[#0078d7]" />
            </div>
          ) : (
            <div className="relative flex size-12 items-center justify-center">
              {a.icon}
              {a.dot && <div className="absolute bottom-0 left-5 h-1 w-2 rounded-full bg-[#7c7c7c]" />}
            </div>
          )}
        </Cell>
      ))}
      <div className="grow" />
      <Cell className="w-10">
        <Svg w={14} h={8}>
          <path d="M1 7l6-6 6 6" {...ink} strokeWidth={1.7} />
        </Svg>
      </Cell>
      <Cell className="w-10">
        <Svg w={20}>
          <path d="M.8 10A9.200 9.200 0 0 1 18 5.500M18.500.6v5.200h-5M10 19.200a9 9 0 0 1-7-4.500M1.300 19.400v-5.200h5" stroke="#1b1b1b" strokeWidth="1.300" />
          <circle cx="15" cy="15" r="5" fill="#ff9a0a" />
        </Svg>
      </Cell>
      <div className="-mt-[2px] w-[56px] text-center text-[15.500px] leading-[20px] tracking-[-0.400px]">
        <div>ENG</div>
        <div>IN</div>
      </div>
      <Cell className="ml-[4px] w-[30px]">
        <Svg w={20} h={15}>
          <path d="M.8 5.500a13 13 0 0 1 18.400 0M3.800 8.500a9 9 0 0 1 12.400 0M6.500 11.300a5 5 0 0 1 7 0" stroke="#1b1b1b" strokeWidth="1.300" strokeLinecap="round" />
          <circle cx="10" cy="13.500" r="1.500" fill="#1b1b1b" />
        </Svg>
      </Cell>
      <Cell className="w-[30px]">
        <Svg w={20} h={16}>
          <path d="M1 5.500h3L8.500 1.500v13L4 10.500H1z" {...ink} strokeWidth={1.2} />
          <path d="M11 5.500q1.800 2.500 0 5M13.800 3.500q3.200 4.500 0 9M16.500 1.300q5 6.500 0 13.400" {...ink} strokeWidth={1.2} />
        </Svg>
      </Cell>
      <Cell className="w-[30px]">
        <Svg w={20} h={12}>
          <rect x=".8" y=".8" width="15.800" height="10.400" rx="2.200" {...ink} strokeWidth={1.3} />
          <rect x="2.500" y="2.500" width="4" height="7" rx=".8" fill="#1b1b1b" />
          <path d="M17.500 4q2 0 2 2t-2 2z" fill="#1b1b1b" stroke="#1b1b1b" />
        </Svg>
      </Cell>
      <div className="-mt-1 w-[93px] pr-px text-right text-[15.500px] leading-[20px] tracking-[-0.400px]">
        <div>16:04</div>
        <div>26-12-2023</div>
      </div>
      <Cell className="mr-[15px] w-[39px]">
        <Svg w={17} h={19}>
          <path d="M8.500 0q6.500 0 6.500 7v4.500l1.700 3.500H.3L2 11.500V7q0-7 6.500-7z" fill="#003e92" />
          <path d="M5.500 16h6q-.7 2.700-3 2.700t-3-2.700z" fill="#003e92" />
        </Svg>
      </Cell>
    </div>
  );
}

export default function App() {
  return (
    <div className="flex h-[1080px] w-[1920px] flex-col overflow-hidden bg-[#f7f7f7] [font-family:'Open_Sans','Noto_Sans',sans-serif]">
      <TabStrip />
      <Toolbar />
      <div className="flex h-[932px]">
        <div className="ml-[5px] flex h-[928px] w-[1860px] overflow-hidden rounded-[11px] bg-[#a5a0a6] shadow-[0_0_3px_rgba(0,0,0,0.25)]">
          <main className="flex grow items-start justify-center pt-[134px]">
            <Calculator />
          </main>
          <Scrollbar />
        </div>
        <Sidebar />
      </div>
      <Taskbar />
    </div>
  );
}
